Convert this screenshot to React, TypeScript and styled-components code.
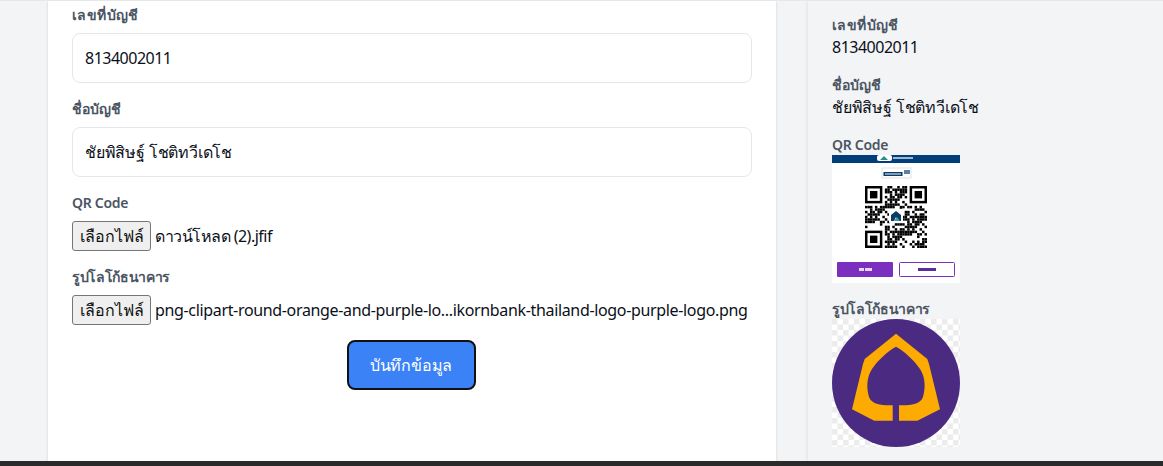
import React from "react";
import styled, { createGlobalStyle } from "styled-components";

const Global = createGlobalStyle`
  html, body { margin: 0; padding: 0; background: #f3f4f6; }
  body { font-family: "Noto Sans", "Open Sans", "DejaVu Sans", sans-serif; color: #0b0f19; }
  * { box-sizing: border-box; }
`;

const Page = styled.div`
  width: 1163px; height: 466px; overflow: hidden;
  display: flex; flex-direction: column; background: #f3f4f6;
  border-top: 1px solid #e5e7eb;
`;
const Main = styled.div`
  flex: 1; min-height: 0; display: flex; align-items: stretch; padding-left: 48px;
`;
const Card = styled.main`
  width: 728px; background: #fff; padding: 0 24px;
  box-shadow: 0 1px 3px rgba(0,0,0,.1), 0 1px 2px rgba(0,0,0,.06);
  display: flex; flex-direction: column;
`;
const Aside = styled.aside`
  margin-left: 32px; flex: 1; padding: 14px 24px 0;
  box-shadow: -1px 0 3px rgba(0,0,0,.08);
  display: flex; flex-direction: column;
`;
const Footer = styled.div`height: 5px; background: #2b2b2b;`;

const Field = styled.div<{ $mt?: number }>`
  margin-top: ${p => p.$mt ?? 0}px; display: flex; flex-direction: column;
`;
const Label = styled.label<{ $track?: number }>`
  font-size: 14px; line-height: 20px; font-weight: 600; color: #4b5563;
  letter-spacing: ${p => p.$track ?? 0}px;
`;
const TextInput = styled.div<{ $track?: number }>`
  margin-top: 8px; height: 50px; border: 1px solid #e5e7eb; border-radius: 8px;
  padding: 0 12px; display: flex; align-items: center; font-size: 16px; color: #0b0f19; background: #fff;
  letter-spacing: ${p => p.$track ?? 0}px;
`;
const FileRow = styled.div`
  margin-top: 8px; display: flex; align-items: center; height: 30px; font-size: 16px; color: #0b0f19;
  white-space: nowrap;
`;
const FileButton = styled.button`
  flex: none; width: 79px; height: 30px; padding: 0; margin-right: 4px;
  background: #efefef; border: 1px solid #767676; border-radius: 3px;
  font: inherit; color: #111;
`;
const FileName = styled.span<{ $track: number }>`
  letter-spacing: ${p => p.$track}px;
`;
const SaveRow = styled.div`display: flex; justify-content: center; margin-top: 15px; padding-right: 2px;`;
const SaveButton = styled.button`
  width: 129px; height: 50px; background: #3b82f6; color: #fff; padding: 0;
  border: 2px solid #111; border-radius: 8px; font: 500 16px "Noto Sans", sans-serif;
  letter-spacing: -0.2px;
`;

const InfoLabel = styled.div<{ $mt?: number; $track?: number }>`
  margin-top: ${p => p.$mt ?? 0}px;
  font-size: 14px; line-height: 20px; font-weight: 600; color: #4b5563;
  letter-spacing: ${p => p.$track ?? 0}px;
`;
const InfoValue = styled.div<{ $strong?: boolean; $track?: number }>`
  font-size: 16px; line-height: 24px; color: #0b0f19;
  font-weight: ${p => (p.$strong ? 500 : 400)};
  letter-spacing: ${p => p.$track ?? 0}px;
`;
const Picture = styled.svg`display: block; width: 128px; height: 128px;`;

const seed = [
  "0010110100110", "1101001011010", "0111010010101", "1010011101001", "0101101001110",
  "1100100111010", "0110011010011", "1001110100101", "0011001011101", "1110100110010",
];
function qrCells() {
  const n = 25;
  const out: [number, number][] = [];
  const finder = (x: number, y: number) => x >= 0 && y >= 0 && x < 8 && y < 8;
  for (let y = 0; y < n; y++) {
    for (let x = 0; x < n; x++) {
      const inF = finder(x, y) || finder(n - 1 - x, y) || finder(x, n - 1 - y);
      if (inF) continue;
      if (x >= 10 && x <= 14 && y >= 10 && y <= 14) continue;
      const r = seed[(y * 3 + x) % seed.length];
      if (r[(x * 7 + y * 5) % r.length] === "1") out.push([x, y]);
    }
  }
  return out;
}

const Finder = ({ x, y, m }: { x: number; y: number; m: number }) => (
  <g>
    <rect x={x} y={y} width={7 * m} height={7 * m} fill="#000" />
    <rect x={x + m} y={y + m} width={5 * m} height={5 * m} fill="#fff" />
    <rect x={x + 2 * m} y={y + 2 * m} width={3 * m} height={3 * m} fill="#000" />
  </g>
);

const QrImage = () => {
  const m = 62 / 25;
  const ox = 33;
  const oy = 31;
  return (
    <Picture viewBox="0 0 128 128">
      <rect width="128" height="128" fill="#fff" />
      <rect width="128" height="8" fill="#023e7a" />
      <rect x="45" y="0" width="15" height="6" rx="2" fill="#fff" />
      <path d="M48 5l4-4 4 4z" fill="#2a8f8a" />
      <rect x="61" y="2" width="20" height="2" fill="#9db6d2" />
      <rect x="50" y="13" width="29" height="10" fill="#fff" stroke="#c9d3de" strokeWidth="0.6" />
      <rect x="51.5" y="17" width="19" height="4" fill="#0d3b66" />
      <rect x="53" y="18.4" width="16" height="1.2" fill="#cfd9e4" />
      <rect x="72" y="15" width="6" height="4" fill="#5b7fa5" />
      <g fill="#000">
        {qrCells().map(([x, y]) => (
          <rect key={`${x}-${y}`} x={ox + x * m} y={oy + y * m} width={m} height={m} />
        ))}
      </g>
      <Finder x={ox} y={oy} m={m} />
      <Finder x={ox + 18 * m} y={oy} m={m} />
      <Finder x={ox} y={oy + 18 * m} m={m} />
      <rect x="57" y="54" width="14" height="14" rx="1" fill="#fff" />
      <path d="M59 60l5-4 5 4v6h-3l-2-4-2 4h-3z" fill="#0d3b66" />
      <path d="M62 66l3-4 3 4z" fill="#2fa59c" />
      <rect x="5" y="107" width="56" height="15" rx="1" fill="#7b2fbf" />
      <rect x="67.5" y="107.5" width="55" height="14" rx="1" fill="#fff" stroke="#7b2fbf" />
      <rect x="27" y="113" width="5" height="3" fill="#e6d8f3" />
      <rect x="33" y="113" width="7" height="3" fill="#e6d8f3" />
      <rect x="86" y="113" width="18" height="3" fill="#5a2d9a" />
    </Picture>
  );
};

const LogoImage = () => (
  <Picture viewBox="0 0 128 128">
    <defs>
      <pattern id="chk" width="11" height="11" patternUnits="userSpaceOnUse">
        <rect width="11" height="11" fill="#fff" />
        <rect width="5.5" height="5.5" fill="#ececec" />
        <rect x="5.5" y="5.5" width="5.5" height="5.5" fill="#ececec" />
      </pattern>
    </defs>
    <rect width="128" height="128" fill="url(#chk)" />
    <circle cx="64" cy="64" r="64" fill="#4b2a82" />
    <path
      d="M64 14.7 L95.3 40 L97 45 L108 90.3 L85.3 101.7 L67 101.7 L67 86.3 C78 86.5 88 86 91 78 C94.5 66 92 56 88 50 C82 41 72 32 64 27.7 C56 32 46 41 40 50 C36 56 33.5 66 37 78 C40 86 50 86.5 60.7 86.3 L60.7 101.7 L42.3 101.7 L20 90.3 L31 45 L32.7 40 Z"
      fill="#fdab00"
    />
  </Picture>
);

export default function App() {
  return (
    <>
      <Global />
      <Page>
        <Main>
          <Card>
            <Field $mt={4}>
              <Label $track={0.4}>เลขที่บัญชี</Label>
              <TextInput $track={-0.5}>8134002011</TextInput>
            </Field>
            <Field $mt={16}>
              <Label>ชื่อบัญชี</Label>
              <TextInput $track={-0.2}>ชัยพิสิษฐ์ โชติทวีเดโช</TextInput>
            </Field>
            <Field $mt={16}>
              <Label $track={-0.3}>QR Code</Label>
              <FileRow>
                <FileButton type="button">เลือกไฟล์</FileButton>
                <FileName $track={-0.5}>ดาวน์โหลด (2).jfif</FileName>
              </FileRow>
            </Field>
            <Field $mt={16}>
              <Label $track={-0.35}>รูปโลโก้ธนาคาร</Label>
              <FileRow>
                <FileButton type="button">เลือกไฟล์</FileButton>
                <FileName $track={-0.34}>png-clipart-round-orange-and-purple-lo...ikornbank-thailand-logo-purple-logo.png</FileName>
              </FileRow>
            </Field>
            <SaveRow>
              <SaveButton type="button">บันทึกข้อมูล</SaveButton>
            </SaveRow>
          </Card>
          <Aside>
            <InfoLabel $track={0.4}>เลขที่บัญชี</InfoLabel>
            <InfoValue $track={-0.5}>8134002011</InfoValue>
            <InfoLabel $mt={16}>ชื่อบัญชี</InfoLabel>
            <InfoValue $strong $track={-0.2}>ชัยพิสิษฐ์ โชติทวีเดโช</InfoValue>
            <InfoLabel $mt={16} $track={-0.3}>QR Code</InfoLabel>
            <QrImage />
            <InfoLabel $mt={16} $track={-0.35}>รูปโลโก้ธนาคาร</InfoLabel>
            <LogoImage />
          </Aside>
        </Main>
        <Footer />
      </Page>
    </>
  );
}
